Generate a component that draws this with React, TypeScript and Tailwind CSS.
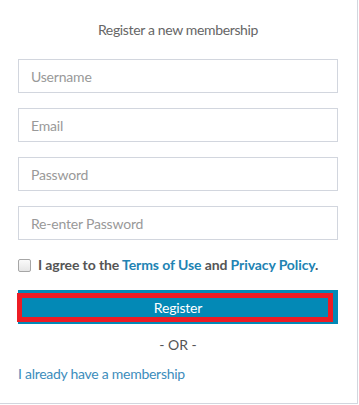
import React from "react";

export default function App() {
  const font = { fontFamily: "Lato, 'Open Sans', sans-serif" };
  return (
    <div className="bg-white w-[359px] h-[405px]" style={font}>
      <div className="w-[358px] h-[404px] border-r border-b border-[#d2d6de] bg-white pl-[18px] pr-[19px] pt-[20px] flex flex-col">
        <p className="text-center text-[14px] leading-[20px] text-[#666] tracking-[-0.35px]">Register a new membership</p>
        <div className="mt-[19px] flex flex-col gap-[15px]">
          {["Username", "Email", "Password", "Re-enter Password"].map((p) => (
            <div key={p} className="h-[34px] border border-[#d2d6de] flex items-center px-[12px] text-[14px] text-[#999] tracking-[-0.2px]">
              {p}
            </div>
          ))}
        </div>
        <div className="mt-[15px] h-[20px] flex items-center">
          <span className="w-[13px] h-[13px] rounded-[2px] border border-[#a6a6a6] bg-gradient-to-b from-[#fafafa] to-[#e6e6e6] ml-0 mr-[7px]" />
          <span className="text-[14px] font-bold text-[#555] leading-[20px] tracking-[-0.1px]">
            I agree to the <span className="text-[#2183b3]">Terms of Use</span> and{" "}
            <span className="text-[#2183b3]">Privacy Policy</span>.
          </span>
        </div>
        <div className="mt-[15px] relative h-[34px] bg-[#0389b6] flex items-center justify-center text-white text-[14px] tracking-[-0.2px]">
          <span className="relative z-10">Register</span>
          <div className="absolute left-[-1px] top-[3px] w-[316px] h-[29px] border-[5px] border-[#ed1c24]" />
        </div>
        <p className="mt-[11px] text-center text-[14px] leading-[20px] text-[#555]">- OR -</p>
        <p className="mt-[9px] text-[14px] leading-[20px] text-[#3c8dbc] tracking-[-0.27px]">I already have a membership</p>
      </div>
    </div>
  );
}
